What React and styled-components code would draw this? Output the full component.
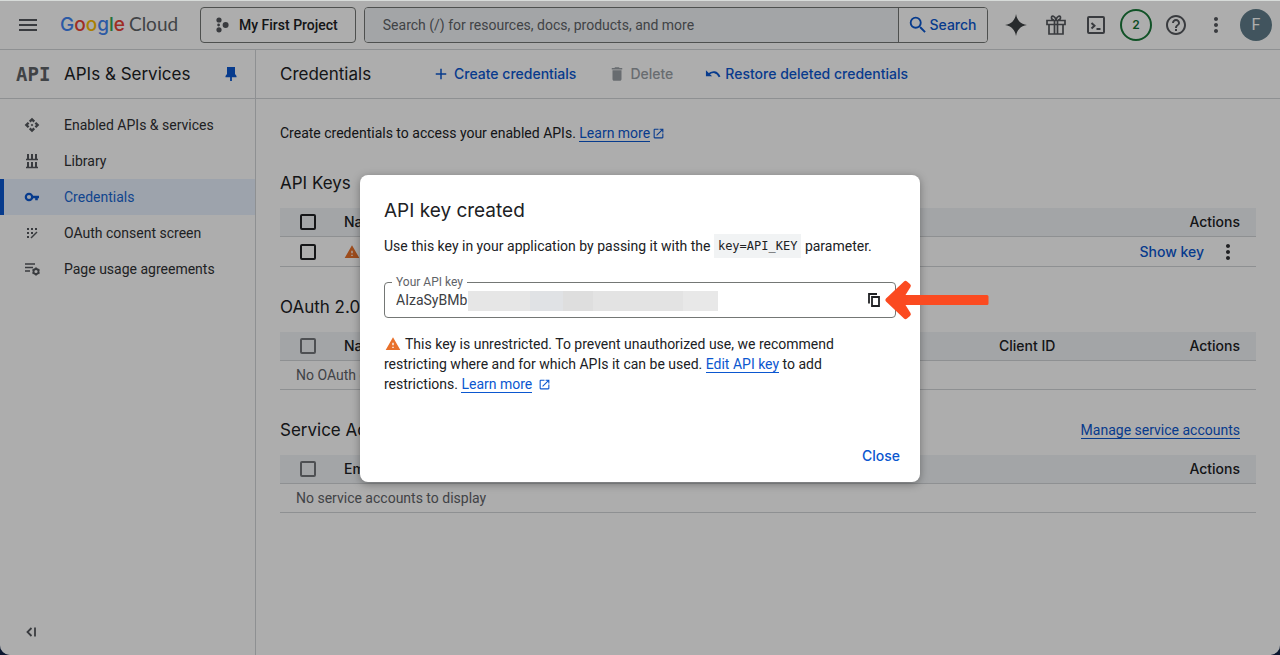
import React from "react";
import styled, { createGlobalStyle } from "styled-components";
import {
  MdMenu, MdSearch, MdHelpOutline, MdMoreVert, MdAdd, MdDelete,
  MdOpenInNew, MdApi, MdWarning,
} from "react-icons/md";

const text = `Roboto, sans-serif`;
const display = `Inter, Roboto, sans-serif`;

const GlobalStyle = createGlobalStyle`
  * { box-sizing: border-box; }
  body {
    margin: 0;
    background: #0b1730;
    color: #202124;
    font: 14px/20px ${text};
  }
  button, input { font: inherit; color: inherit; }
  svg { display: block; flex: none; }
`

const Page = styled.div`
  position: relative;
  min-height: 100vh;
  display: flex;
  flex-direction: column;
  background: #fff;
  border-radius: 0 0 10px 10px;
  overflow: hidden;
`

const Header = styled.header`
  display: flex;
  align-items: center;
  height: 50px;
  padding: 0 4px 0 8px;
  border-bottom: 1px solid #d2d4d8;
`

const IconBtn = styled.button`
  display: flex;
  align-items: center;
  justify-content: center;
  width: 40px;
  height: 40px;
  padding: 0;
  border: none;
  background: none;
  color: #55585d;
  cursor: pointer;
`

const Logo = styled.a`
  display: flex;
  align-items: baseline;
  gap: 4px;
  width: 140px;
  margin-left: 12px;
  font: 500 19px/24px ${display};
  text-decoration: none;
  white-space: nowrap;
`

const Letter = styled.span`
  color: ${p => p.$color};
`

const Cloud = styled.span`
  font: 400 19px/24px Lato, sans-serif;
  color: #5f6368;
`

const ProjectBtn = styled.button`
  display: flex;
  align-items: center;
  gap: 9px;
  height: 36px;
  padding: 0 17px 0 13px;
  border: 1px solid #747775;
  border-radius: 4px;
  background: none;
  font-weight: 500;
  white-space: nowrap;
`

const SearchBar = styled.form`
  flex: 1;
  display: flex;
  height: 36px;
  margin: 0 8px;
  border: 1px solid #747775;
  border-radius: 4px;
  overflow: hidden;
`

const SearchInput = styled.input`
  flex: 1;
  min-width: 0;
  padding: 0 18px;
  border: none;
  background: #f0f4f6;
  &::placeholder { color: #5f6368; opacity: 1; }
`

const SearchBtn = styled.button`
  display: flex;
  align-items: center;
  justify-content: center;
  width: 89px;
  padding: 0 2px 0 0;
  border: none;
  border-left: 1px solid #747775;
  background: #fff;
  color: #0b57d0;
  font: 500 14px/20px ${display};
`

const Count = styled.span`
  display: flex;
  align-items: center;
  justify-content: center;
  width: 32px;
  height: 32px;
  border: 2px solid #1a7a3a;
  border-radius: 50%;
  color: #137333;
  font: 600 12px/16px ${display};
`

const Avatar = styled.span`
  width: 32px;
  height: 32px;
  border-radius: 50%;
  background: #607d8b;
  color: #fff;
  font-size: 16px;
  line-height: 32px;
`

const Body = styled.div`
  flex: 1;
  display: flex;
`

const Sidebar = styled.aside`
  display: flex;
  flex-direction: column;
  width: 256px;
  flex: none;
  border-right: 1px solid #d2d4d8;
`

const SideHead = styled.div`
  display: flex;
  align-items: center;
  height: 49px;
  padding: 0 16px;
  border-bottom: 1px solid #d2d4d8;
`

const ApiMark = styled.span`
  width: 48px;
  color: #5f6368;
  font: bold 19px/24px "DejaVu Sans Mono", monospace;
`

const Title = styled.h2`
  margin: 0;
  font: 400 ${p => p.$size || 17}px/24px ${display};
  color: #202124;
  white-space: nowrap;
`

const Pin = styled.button`
  margin: 0 2px 0 auto;
  padding: 0;
  border: none;
  background: none;
  color: #0b57d0;
`

const Nav = styled.nav`
  padding-top: 8px;
`

const NavItem = styled.a`
  display: flex;
  align-items: center;
  height: 36px;
  gap: 24px;
  padding-left: 20px;
  border-left: 4px solid ${p => p.$active ? "#0b57d0" : "transparent"};
  background: ${p => p.$active ? "#e8f0fe" : "none"};
  color: ${p => p.$active ? "#1967d2" : "#303134"};
  text-decoration: none;
  svg { color: ${p => p.$active ? "#0b57d0" : "#55585d"}; }
`

const Collapse = styled(IconBtn)`
  margin: auto 0 3px 11px;
`

const Main = styled.main`
  flex: 1;
  min-width: 0;
`

const Toolbar = styled.div`
  display: flex;
  align-items: center;
  height: 49px;
  padding: 0 24px;
  border-bottom: 1px solid #d2d4d8;
`

const ToolTitle = styled(Title).attrs({ as: "h1" })`
  width: 152px;
`

const ToolBtn = styled.button`
  display: flex;
  align-items: center;
  gap: 4px;
  margin-right: 32px;
  padding: 0;
  border: none;
  background: none;
  color: ${p => p.disabled ? "#9aa0a6" : "#0b57d0"};
  font: 500 14px/20px ${display};
  white-space: nowrap;
`

const Content = styled.div`
  padding: 24px;
`

const Intro = styled.p`
  margin: 0 0 28px;
`

const Link = styled.a`
  color: #0b57d0;
  text-decoration: none;
  border-bottom: 1px solid #0b57d0;
`

const NewTab = styled(MdOpenInNew)`
  display: inline-block;
  margin-left: 2px;
  color: #0b57d0;
  vertical-align: -2px;
`

const Section = styled.section`
  margin-bottom: 28px;
`

const SectionHead = styled.div`
  display: flex;
  justify-content: space-between;
  align-items: center;
  height: 24px;
  padding-right: 16px;
  margin-bottom: 13px;
`

const Table = styled.table`
  width: 100%;
  border-collapse: separate;
  border-spacing: 0;
  table-layout: fixed;
`

const Th = styled.th`
  width: ${p => p.$width || "auto"};
  height: 29px;
  padding: 0 16px 0 ${p => p.$check ? 20 : 0}px;
  border-bottom: 1px solid #d2d4d8;
  background: #f0f4f7;
  font: 500 14px/20px ${display};
  text-align: ${p => p.$right ? "right" : "left"};
`

const Td = styled.td`
  height: ${p => p.$tall ? 30 : 29}px;
  padding: 0 16px 0 ${p => p.$check ? 20 : p.$empty ? 16 : 0}px;
  border-bottom: 1px solid #d2d4d8;
  color: #5f6368;
`

const Check = styled.input.attrs({ type: "checkbox" })`
  appearance: none;
  display: block;
  width: 16px;
  height: 16px;
  margin: 0;
  border: 2px solid #202124;
  border-radius: 2px;
  &:disabled { border-color: #74777b; }
`

const RowActions = styled.div`
  display: flex;
  align-items: center;
  justify-content: flex-end;
  gap: 12px;
`

const TextBtn = styled.button`
  padding: 0;
  border: none;
  background: none;
  color: #0b57d0;
  font: 500 14px/20px ${display};
  white-space: nowrap;
`

const MoreBtn = styled(TextBtn)`
  color: #303134;
`

const Backdrop = styled.div`
  position: absolute;
  inset: 0;
  display: flex;
  align-items: center;
  justify-content: center;
  padding-top: 2px;
  background: rgba(0, 0, 0, 0.32);
  box-shadow: inset 0 1px rgba(225, 230, 228, 0.8);
`

const Dialog = styled.div`
  width: 560px;
  max-width: 100%;
  padding: 24px 24px 16px;
  background: #fff;
  border-radius: 8px;
  box-shadow: 0 2px 8px rgba(0, 0, 0, 0.35);
`

const DialogText = styled.p`
  margin: 0;
`

const Usage = styled(DialogText)`
  margin: 11px 0 24px;
  line-height: 24px;
`

const Code = styled.code`
  display: inline-block;
  padding: 0 4px;
  background: #f1f3f4;
  font: 12px/24px "DejaVu Sans Mono", monospace;
  vertical-align: top;
`

const Field = styled.div`
  position: relative;
  display: flex;
  align-items: center;
  height: 36px;
  margin-bottom: 16px;
  padding: 0 1px 0 11px;
  border: 1px solid #747775;
  border-radius: 4px;
`

const FieldLabel = styled.label`
  position: absolute;
  top: -9px;
  left: 7px;
  padding: 0 4px;
  background: #fff;
  color: #5f6368;
  font-size: 12px;
  line-height: 16px;
`

const FieldInput = styled.input`
  flex: 1;
  min-width: 0;
  padding: 0;
  border: none;
  outline: none;
  background: none;
  color: #3c4043;
`

const Redacted = styled.span`
  position: absolute;
  top: 8px;
  left: 83px;
  width: 250px;
  height: 20px;
  background: linear-gradient(90deg,
    #e6e6e6 0 25%, #e0e2e5 25% 38%, #dedede 38% 50%, #e3e3e3 50% 86%, #e8e8e8 86%);
`

const CopyBtn = styled(IconBtn)`
  color: #202124;
`

const Arrow = styled.svg`
  position: absolute;
  top: -3px;
  left: 499px;
`

const Warn = styled(MdWarning)`
  display: inline-block;
  color: #e8702a;
  vertical-align: -3px;
`

const NoteWarn = styled(Warn)`
  margin: 0 4px 0 1px;
`

const DialogActions = styled.div`
  display: flex;
  justify-content: flex-end;
  margin-top: 52px;
`

const CloseBtn = styled(TextBtn)`
  margin-right: -4px;
`

const ProjectIcon = () => (
  <svg width="16" height="16" viewBox="0 0 16 16" fill="#55585d">
    <circle cx="5" cy="3" r="2.6" />
    <circle cx="5" cy="12.8" r="2.6" />
    <circle cx="11.6" cy="8" r="3" />
    <circle cx="4.6" cy="8" r="1.4" />
  </svg>
)

const SparkIcon = () => (
  <svg width="22" height="22" viewBox="0 0 22 22" fill="#3c4043">
    <path d="M11 0c.8 6 4.5 10 11 11-6.5 1-10.2 5-11 11-.8-6-4.5-10-11-11C6.5 10 10.2 6 11 0z" />
  </svg>
)

const GiftIcon = () => (
  <svg width="22" height="22" viewBox="0 0 22 22" fill="none" stroke="currentColor" strokeWidth="1.7">
    <path d="M2 6.5h18v4H2zM4 10.5V20h14v-9.5M9.500 6.5V20M12.500 6.5V20" />
    <path d="M11 6C10 2 6.500 1 6.500 3.600c0 1.500 1 2.400 2.500 2.400M11 6c1-4 4.500-5 4.500-2.400 0 1.500-1 2.400-2.500 2.400" />
  </svg>
)

const ShellIcon = () => (
  <svg width="20" height="20" viewBox="0 0 20 20" fill="none" stroke="currentColor" strokeWidth="2">
    <rect x="2" y="2" width="16" height="16" rx="1" />
    <path d="M5.500 8l3 2.800-3 2.800M10.500 14h4" />
  </svg>
)

const PinIcon = () => (
  <svg width="12" height="16" viewBox="0 0 12 16" fill="currentColor">
    <path d="M2 1h8v7l1.500 2v1.200H6.900V15H5.100v-3.800H.5V10L2 8z" />
  </svg>
)

const LibraryIcon = () => (
  <svg width="16" height="16" viewBox="0 0 16 16" fill="none" stroke="currentColor" strokeWidth="2">
    <path d="M4 1v5M8 1v5M12 1v5M4 9v5M8 9v5M12 9v5" />
    <path d="M2 6.500h12M2 14.500h12" strokeWidth="1.4" />
  </svg>
)

const KeyIcon = () => (
  <svg width="16" height="16" viewBox="0 0 16 16" fill="none" stroke="currentColor" strokeWidth="2.2">
    <circle cx="5" cy="8" r="3.2" />
    <path d="M8 8h7M12.500 8v3.200" strokeWidth="2.6" />
  </svg>
)

const ConsentIcon = () => (
  <svg width="16" height="16" viewBox="0 0 16 16" fill="currentColor">
    <path d="M3 3h2v2H3zM7 3h2v2H7zM11 3h2v2h-2zM3 7h2v2H3zM7 7h2v2H7zM3 11h2v2H3z" />
    <path d="M7 13l6-6" stroke="currentColor" strokeWidth="1.5" />
  </svg>
)

const AgreementIcon = () => (
  <svg width="16" height="16" viewBox="0 0 16 16" fill="none" stroke="currentColor" strokeWidth="1.5">
    <path d="M1 3h10M1 6.500h8M1 10h5" />
    <circle cx="12" cy="10.5" r="2.5" strokeWidth="1.8" />
    <path d="M12 6.500v1.500M12 13v1.500M8.500 8.500l1.400.8M14.100 11.700l1.400.8M8.500 12.500l1.400-.8M14.100 9.300l1.400-.8" strokeWidth="1.8" />
  </svg>
)

const RestoreIcon = () => (
  <svg width="16" height="16" viewBox="0 0 17 16" fill="none" stroke="currentColor" strokeWidth="2">
    <path d="M3.500 8.500C8 4.500 13 5.500 15.500 11" />
    <path d="M1 4v6.500h6.500z" fill="currentColor" stroke="none" />
  </svg>
)

const CopyIcon = () => (
  <svg width="14" height="16" viewBox="0 0 14 16" fill="none" stroke="currentColor" strokeWidth="1.8">
    <path d="M2 11.500V2h8" />
    <path d="M5 5h7v9H5z" />
  </svg>
)

const CollapseIcon = () => (
  <svg width="12" height="10" viewBox="0 0 12 10" fill="none" stroke="currentColor" strokeWidth="1.8">
    <path d="M6.500 1L2.500 5l4 4M10 0.500v9" />
  </svg>
)

const GOOGLE = [
  ["G", "#4285f4"], ["o", "#ea4335"], ["o", "#fbbc04"],
  ["g", "#4285f4"], ["l", "#34a853"], ["e", "#ea4335"],
]

const NAV = [
  { label: "Enabled APIs & services", icon: <MdApi size={16} /> },
  { label: "Library", icon: <LibraryIcon /> },
  { label: "Credentials", icon: <KeyIcon />, active: true },
  { label: "OAuth consent screen", icon: <ConsentIcon /> },
  { label: "Page usage agreements", icon: <AgreementIcon /> },
]

const Credentials = ({ title, first, client, link, empty, children }) => (
  <Section>
    <SectionHead>
      <Title>{title}</Title>
      {link && <div><Link href="#">{link}</Link></div>}
    </SectionHead>
    <Table>
      <thead>
        <tr>
          <Th $check $width="64px"><Check aria-label={"Select all " + title} disabled={!!empty} /></Th>
          <Th>{first}</Th>
          {client && <Th $width="117px">{client}</Th>}
          <Th $right $width="140px">Actions</Th>
        </tr>
      </thead>
      <tbody>
        {empty ? <tr><Td $empty colSpan={client ? 4 : 3}>{empty}</Td></tr> : children}
      </tbody>
    </Table>
  </Section>
)

const App = () => {
  return (
    <Page>
      <GlobalStyle />
      <Header>
        <IconBtn aria-label="Menu"><MdMenu size={24} /></IconBtn>
        <Logo href="#">
          <span>{GOOGLE.map(([c, color], i) => <Letter key={i} $color={color}>{c}</Letter>)}</span>
          <Cloud>Cloud</Cloud>
        </Logo>
        <ProjectBtn><ProjectIcon />My First Project</ProjectBtn>
        <SearchBar>
          <SearchInput aria-label="Search" placeholder="Search (/) for resources, docs, products, and more" />
          <SearchBtn type="button"><MdSearch size={22} />Search</SearchBtn>
        </SearchBar>
        <IconBtn aria-label="Assistant"><SparkIcon /></IconBtn>
        <IconBtn aria-label="Free trial"><GiftIcon /></IconBtn>
        <IconBtn aria-label="Cloud Shell"><ShellIcon /></IconBtn>
        <IconBtn aria-label="Notifications"><Count>2</Count></IconBtn>
        <IconBtn aria-label="Help"><MdHelpOutline size={24} /></IconBtn>
        <IconBtn aria-label="More"><MdMoreVert size={24} /></IconBtn>
        <IconBtn aria-label="Account"><Avatar>F</Avatar></IconBtn>
      </Header>

      <Body>
        <Sidebar>
          <SideHead>
            <ApiMark>API</ApiMark>
            <Title>APIs &amp; Services</Title>
            <Pin aria-label="Unpin"><PinIcon /></Pin>
          </SideHead>
          <Nav>
            {NAV.map(n => (
              <NavItem key={n.label} href="#" $active={n.active}>{n.icon}{n.label}</NavItem>
            ))}
          </Nav>
          <Collapse aria-label="Collapse"><CollapseIcon /></Collapse>
        </Sidebar>

        <Main>
          <Toolbar>
            <ToolTitle>Credentials</ToolTitle>
            <ToolBtn><MdAdd size={18} />Create credentials</ToolBtn>
            <ToolBtn disabled><MdDelete size={18} />Delete</ToolBtn>
            <ToolBtn><RestoreIcon />Restore deleted credentials</ToolBtn>
          </Toolbar>
          <Content>
            <Intro>
              Create credentials to access your enabled APIs. <Link href="#">Learn more</Link>
              <NewTab size={13} />
            </Intro>
            <Credentials title="API Keys" first="Name">
              <tr>
                <Td $check $tall><Check aria-label="Select key" /></Td>
                <Td $tall><Warn size={16} /></Td>
                <Td $tall>
                  <RowActions>
                    <TextBtn>Show key</TextBtn>
                    <MoreBtn aria-label="Key actions"><MdMoreVert size={24} /></MoreBtn>
                  </RowActions>
                </Td>
              </tr>
            </Credentials>
            <Credentials title="OAuth 2.0 Client IDs" first="Name" client="Client ID" empty="No OAuth clients to display" />
            <Credentials title="Service Accounts" first="Email" link="Manage service accounts" empty="No service accounts to display" />
          </Content>
        </Main>
      </Body>

      <Backdrop>
        <Dialog role="dialog" aria-labelledby="dialog-title">
          <Title id="dialog-title" $size={19}>API key created</Title>
          <Usage>
            Use this key in your application by passing it with the <Code>key=API_KEY</Code> parameter.
          </Usage>
          <Field>
            <FieldLabel htmlFor="api-key">Your API key</FieldLabel>
            <FieldInput id="api-key" readOnly value="AIzaSyBMb" />
            <Redacted />
            <CopyBtn aria-label="Copy"><CopyIcon /></CopyBtn>
            <Arrow width="106" height="40" viewBox="0 0 106 40" fill="#fb4a20">
              <path d="M2 18.500L20 1.500q1.500-1.500 3 0l3 2.500q1.500 1.500.5 3L21.500 15H103q1.500 0 1.500 1.500v7q0 1.500-1.500 1.500H21.500l5 8q1 1.500-.5 3l-3 2.500q-1.500 1.500-3 0L2 21.500q-1.500-1.500 0-3z" />
            </Arrow>
          </Field>
          <DialogText>
            <NoteWarn size={16} />This key is unrestricted. To prevent unauthorized use, we recommend
            restricting where and for which APIs it can be used. <Link href="#">Edit API key</Link> to
            add restrictions. <Link href="#">Learn more</Link> <NewTab size={13} />
          </DialogText>
          <DialogActions><CloseBtn>Close</CloseBtn></DialogActions>
        </Dialog>
      </Backdrop>
    </Page>
  );
}

export default App;
